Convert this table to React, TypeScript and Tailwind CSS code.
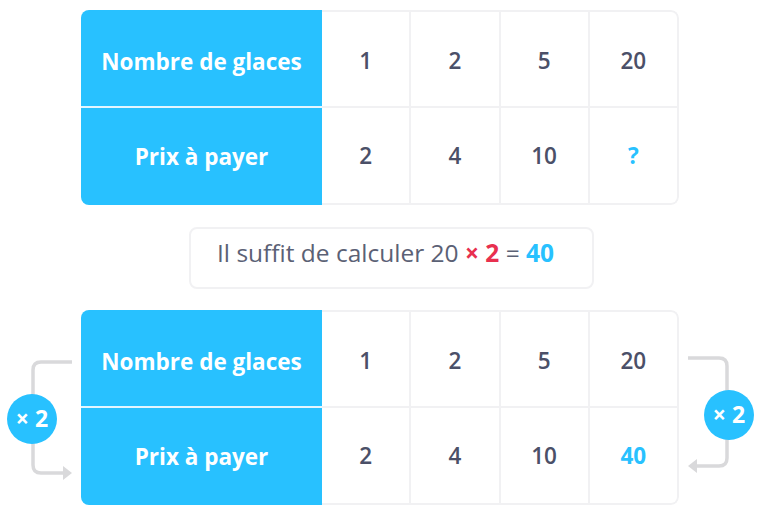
const cols = [
  ['1', '2'],
  ['2', '4'],
  ['5', '10'],
]

function Table({ last }: { last: React.ReactNode }) {
  return (
    <div className="flex h-[195px] w-[598px] overflow-hidden rounded-[8px]">
      <div className="flex w-[241px] shrink-0 flex-col bg-[#28c1ff] text-[22.5px] font-bold text-white">
        <div className="flex h-[96px] items-center justify-center pt-[7px]">Nombre de glaces</div>
        <div className="h-[2px] bg-[#e3f6ff]" />
        <div className="flex flex-1 items-center justify-center">Prix à payer</div>
      </div>
      <div className="flex flex-1 rounded-r-[8px] border-2 border-l-0 border-[#f1f1f3] text-[22.5px] font-semibold text-[#4b5068]">
        {cols.map(([a, b], i) => (
          <div key={i} className="flex flex-1 flex-col border-r-2 border-[#f1f1f3]">
            <div className="flex h-[96px] items-center justify-center border-b-2 border-[#f1f1f3] pt-[4px]">{a}</div>
            <div className="flex flex-1 items-center justify-center">{b}</div>
          </div>
        ))}
        <div className="flex flex-1 flex-col">
          <div className="flex h-[96px] items-center justify-center border-b-2 border-[#f1f1f3] pt-[4px]">20</div>
          <div className="flex flex-1 items-center justify-center font-bold text-[#28c1ff]">{last}</div>
        </div>
      </div>
    </div>
  )
}

function Badge() {
  return (
    <div className="flex h-[50px] w-[50px] items-center justify-center rounded-full bg-[#28c1ff] pb-[2px] text-[23px] font-bold text-white">
      × 2
    </div>
  )
}

export default function App() {
  return (
    <div
      className="h-[518px] w-[764px] bg-white pt-[10px]"
      style={{ fontFamily: '"Open Sans", Lato, sans-serif' }}
    >
      <div className="pl-[81px]">
        <Table last="?" />
      </div>

      <div className="mt-[22px] ml-[189px] flex h-[62px] w-[405px] items-center rounded-[8px] border-2 border-[#f1f1f3] pb-[9px] pl-[26px] text-[24.5px] text-[#5b6175]">
        Il suffit de calculer 20&nbsp;<span className="font-bold text-[#e8304f]">× 2</span>&nbsp;=&nbsp;
        <span className="font-bold text-[#28c1ff]">40</span>
      </div>

      <div className="mt-[21px] flex">
        <div className="relative h-[195px] w-[81px]">
          <svg className="absolute left-0 top-0" width="81" height="195" viewBox="0 0 81 195">
            <path d="M72 52 H41 Q33 52 33 60 V155 Q33 163 41 163 H64" fill="none" stroke="#d9d9db" strokeWidth="3.5" />
            <path d="M63 156 L72 163 L63 170 Z" fill="#d9d9db" />
          </svg>
          <div className="absolute left-[7px] top-[84px]">
            <Badge />
          </div>
        </div>
        <Table last="40" />
        <div className="relative h-[195px] w-[85px]">
          <svg className="absolute left-0 top-0" width="85" height="195" viewBox="0 0 85 195">
            <path d="M9 48 H40 Q48 48 48 56 V148 Q48 156 40 156 H17" fill="none" stroke="#d9d9db" strokeWidth="3.5" />
            <path d="M18 149 L9 156 L18 163 Z" fill="#d9d9db" />
          </svg>
          <div className="absolute left-[25px] top-[80px]">
            <Badge />
          </div>
        </div>
      </div>
    </div>
  )
}
